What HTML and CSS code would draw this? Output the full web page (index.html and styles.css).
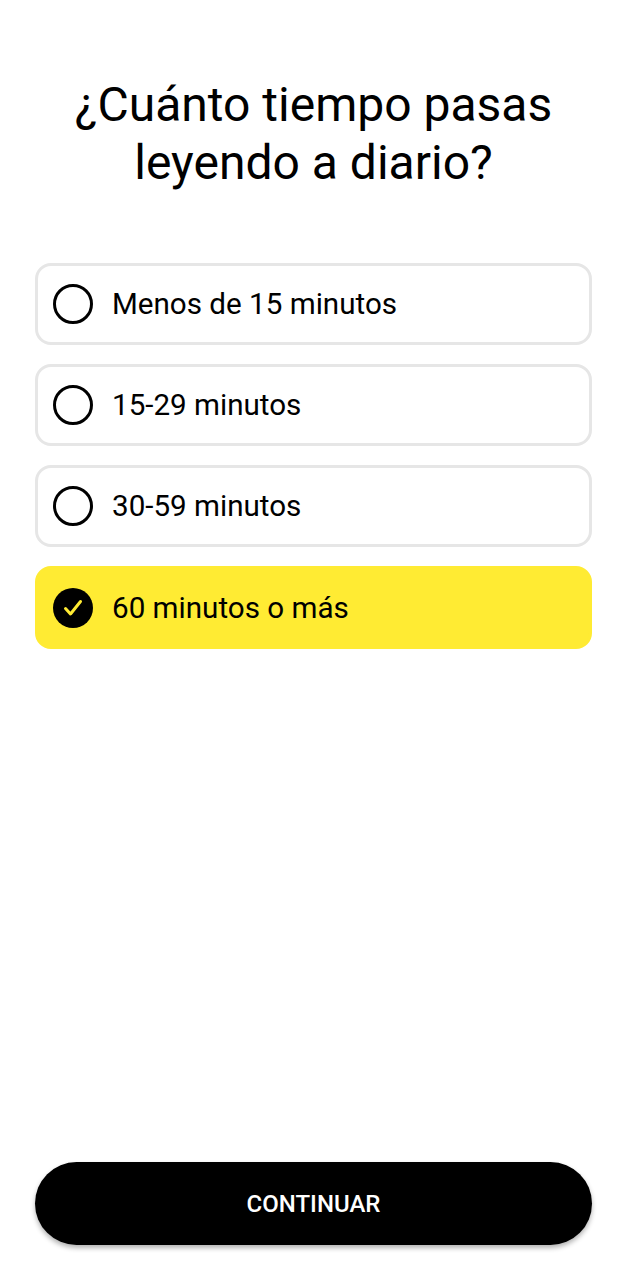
FILE: index.html
```html
<!DOCTYPE html>
<html lang="es">
<head>
<meta charset="utf-8">
<link rel="stylesheet" href="styles.css">
</head>
<body>
<div class="screen">
  <h1 class="title">¿Cuánto tiempo pasas<br>leyendo a diario?</h1>
  <div class="options">
    <div class="option">
      <svg class="radio" viewBox="0 0 40 40"><circle cx="20" cy="20" r="18.5" fill="none" stroke="#000" stroke-width="3"/></svg>
      <span class="label">Menos de 15 minutos</span>
    </div>
    <div class="option">
      <svg class="radio" viewBox="0 0 40 40"><circle cx="20" cy="20" r="18.5" fill="none" stroke="#000" stroke-width="3"/></svg>
      <span class="label">15-29 minutos</span>
    </div>
    <div class="option">
      <svg class="radio" viewBox="0 0 40 40"><circle cx="20" cy="20" r="18.5" fill="none" stroke="#000" stroke-width="3"/></svg>
      <span class="label">30-59 minutos</span>
    </div>
    <div class="option selected">
      <svg class="radio" viewBox="0 0 40 40"><circle cx="20" cy="20" r="20" fill="#000"/><path d="M12.5 20.5 L17.5 26 L27.5 13.5" fill="none" stroke="#ffeb33" stroke-width="3" stroke-linecap="round" stroke-linejoin="round"/></svg>
      <span class="label">60 minutos o más</span>
    </div>
  </div>
  <div class="spacer"></div>
  <button class="continue">CONTINUAR</button>
</div>
</body>
</html>
```
FILE: styles.css
```css
html, body {
  margin: 0;
  padding: 0;
  background: #fff;
}
body {
  font-family: Roboto, "Noto Sans", sans-serif;
  color: #000;
}
.screen {
  height: 1280px;
  box-sizing: border-box;
  display: flex;
  flex-direction: column;
  padding: 76px 35px 35px 35px;
}
.title {
  margin: 0;
  font-weight: 400;
  font-size: 48px;
  line-height: 58px;
  text-align: center;
}
.options {
  display: flex;
  flex-direction: column;
  gap: 19px;
  margin-top: 71px;
}
.option {
  height: 82px;
  box-sizing: border-box;
  border: 3px solid #e6e6e6;
  border-radius: 16px;
  display: flex;
  align-items: center;
  padding-left: 15px;
  gap: 19px;
}
.option.selected {
  background: #ffeb33;
  border-color: #ffeb33;
  height: 83px;
}
.radio {
  width: 40px;
  height: 40px;
  flex: none;
}
.label {
  font-size: 29.6px;
}
.spacer {
  flex: 1;
}
.continue {
  height: 83px;
  border: none;
  border-radius: 42px;
  background: #000;
  color: #fff;
  font-family: Roboto, "Noto Sans", sans-serif;
  font-weight: 500;
  font-size: 24px;
  box-shadow: 0 3px 5px rgba(0,0,0,0.3);
  width: 100%;
}
```
